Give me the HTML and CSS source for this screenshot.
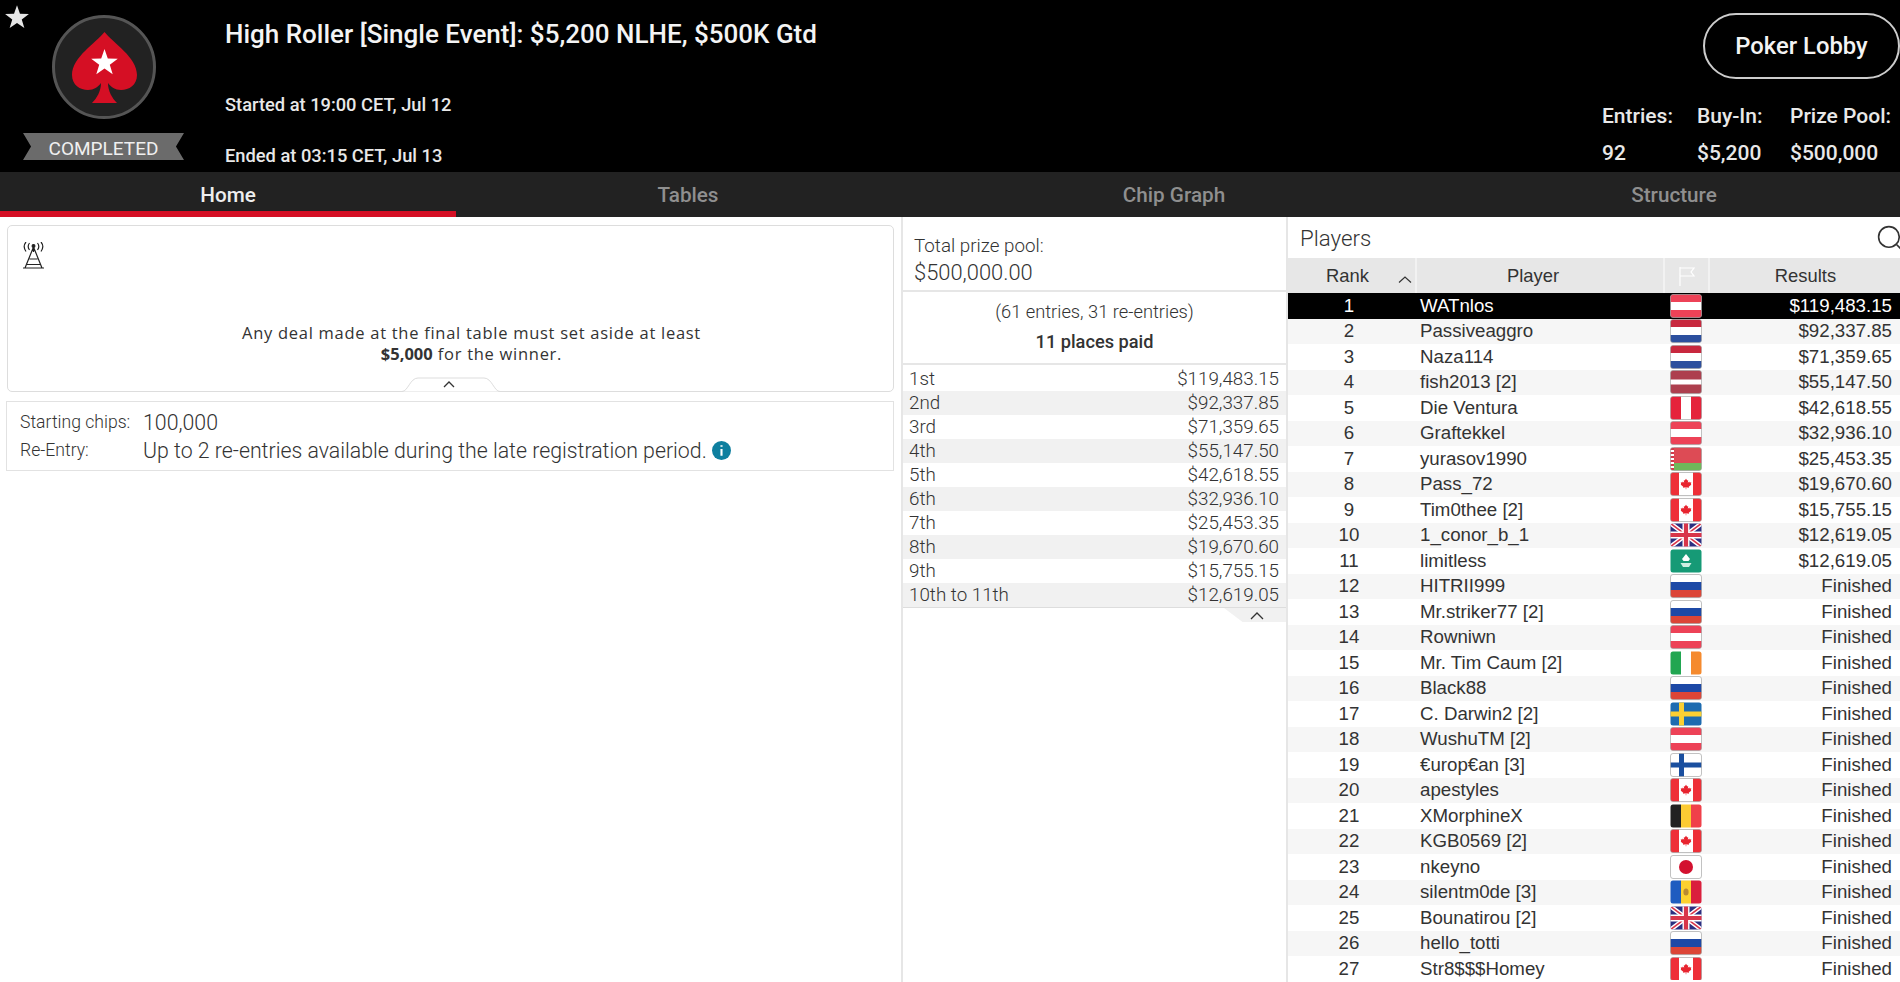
FILE: index.html
```html
<!DOCTYPE html>
<html lang="en">
<head>
<meta charset="utf-8">
<title>High Roller [Single Event]</title>
<link rel="stylesheet" href="styles.css">
</head>
<body>
<svg class="defs" aria-hidden="true">
  <defs>
    <clipPath id="fc"><rect x="0.5" y="0.5" width="31" height="23" rx="2.500"/></clipPath>
    <symbol id="leaf" viewBox="0 0 12 12"><path d="M6 0 7.200 2.200 8.400 1.700 8 4.500 9.500 3.200 10 4.300 12 4 11.300 6 12 6.500 9 9 9.300 10 6.300 9.600V12H5.700V9.600L2.700 10 3 9 0 6.500.7 6 0 4 2 4.300 2.500 3.200 4 4.500 3.600 1.700 4.800 2.200Z" fill="#e8242f"/></symbol>
    <symbol id="f-at" viewBox="0 0 32 24"><g clip-path="url(#fc)"><rect width="32" height="24" fill="#fff"/><rect width="32" height="8" fill="#ed4257"/><rect y="16" width="32" height="8" fill="#ed4257"/></g><rect x="0.5" y="0.5" width="31" height="23" rx="2.500" fill="none" stroke="#999" stroke-opacity=".6"/></symbol>
    <symbol id="f-nl" viewBox="0 0 32 24"><g clip-path="url(#fc)"><rect width="32" height="24" fill="#fff"/><rect width="32" height="8" fill="#c8283e"/><rect y="16" width="32" height="8" fill="#2c4f9e"/></g><rect x="0.5" y="0.5" width="31" height="23" rx="2.500" fill="none" stroke="#999" stroke-opacity=".6"/></symbol>
    <symbol id="f-lv" viewBox="0 0 32 24"><g clip-path="url(#fc)"><rect width="32" height="24" fill="#fff"/><rect width="32" height="9.500" fill="#ad3f4e"/><rect y="14.500" width="32" height="9.500" fill="#ad3f4e"/></g><rect x="0.5" y="0.5" width="31" height="23" rx="2.500" fill="none" stroke="#999" stroke-opacity=".6"/></symbol>
    <symbol id="f-pe" viewBox="0 0 32 24"><g clip-path="url(#fc)"><rect width="32" height="24" fill="#fff"/><rect width="11" height="24" fill="#e5233b"/><rect x="21" width="11" height="24" fill="#e5233b"/></g><rect x="0.5" y="0.5" width="31" height="23" rx="2.500" fill="none" stroke="#999" stroke-opacity=".6"/></symbol>
    <symbol id="f-by" viewBox="0 0 32 24"><g clip-path="url(#fc)"><rect width="32" height="16" fill="#dd4b55"/><rect y="16" width="32" height="8" fill="#6fb85a"/><rect width="4" height="24" fill="#fff"/><path d="M0 2H4M0 6H4M0 10H4M0 14H4M0 18H4M0 22H4" stroke="#d2394a" stroke-width="2"/></g><rect x="0.5" y="0.5" width="31" height="23" rx="2.500" fill="none" stroke="#999" stroke-opacity=".6"/></symbol>
    <symbol id="f-ca" viewBox="0 0 32 24"><g clip-path="url(#fc)"><rect width="32" height="24" fill="#fff"/><rect width="9" height="24" fill="#ee2f38"/><rect x="23" width="9" height="24" fill="#ee2f38"/><use href="#leaf" x="10.500" y="6.500" width="11" height="11"/></g><rect x="0.5" y="0.5" width="31" height="23" rx="2.500" fill="none" stroke="#999" stroke-opacity=".6"/></symbol>
    <symbol id="f-gb" viewBox="0 0 32 24"><g clip-path="url(#fc)"><rect width="32" height="24" fill="#2b2f80"/><path d="M0 0 32 24M32 0 0 24" stroke="#fff" stroke-width="4.500"/><path d="M0 0 32 24M32 0 0 24" stroke="#d8354a" stroke-width="1.600"/><path d="M16 0V24M0 12H32" stroke="#fff" stroke-width="7"/><path d="M16 0V24M0 12H32" stroke="#d8354a" stroke-width="4.200"/></g></symbol>
    <symbol id="f-mo" viewBox="0 0 32 24"><g clip-path="url(#fc)"><rect width="32" height="24" fill="#169a76"/><path d="M16 5 20 10 18.500 12H13.500L12 10Z" fill="#fff"/><path d="M10.500 14H21.500L19 18H13Z" fill="#cdeee2"/></g></symbol>
    <symbol id="f-ru" viewBox="0 0 32 24"><g clip-path="url(#fc)"><rect width="32" height="24" fill="#fff"/><rect y="8" width="32" height="8" fill="#1d49a6"/><rect y="16" width="32" height="8" fill="#dc4537"/></g><rect x="0.5" y="0.5" width="31" height="23" rx="2.500" fill="none" stroke="#999" stroke-opacity=".6"/></symbol>
    <symbol id="f-ie" viewBox="0 0 32 24"><g clip-path="url(#fc)"><rect width="32" height="24" fill="#fff"/><rect width="11" height="24" fill="#21a651"/><rect x="21" width="11" height="24" fill="#f58a2e"/></g></symbol>
    <symbol id="f-se" viewBox="0 0 32 24"><g clip-path="url(#fc)"><rect width="32" height="24" fill="#1d6bb0"/><rect x="9" width="5" height="24" fill="#fbcf33"/><rect y="9.500" width="32" height="5" fill="#fbcf33"/></g></symbol>
    <symbol id="f-fi" viewBox="0 0 32 24"><g clip-path="url(#fc)"><rect width="32" height="24" fill="#fff"/><rect x="9" width="5" height="24" fill="#1a4f9f"/><rect y="9.500" width="32" height="5" fill="#1a4f9f"/></g><rect x="0.5" y="0.5" width="31" height="23" rx="2.500" fill="none" stroke="#999" stroke-opacity=".6"/></symbol>
    <symbol id="f-be" viewBox="0 0 32 24"><g clip-path="url(#fc)"><rect width="11" height="24" fill="#222"/><rect x="11" width="10" height="24" fill="#fccb33"/><rect x="21" width="11" height="24" fill="#f0404a"/></g></symbol>
    <symbol id="f-jp" viewBox="0 0 32 24"><g clip-path="url(#fc)"><rect width="32" height="24" fill="#fff"/><circle cx="16" cy="12" r="7" fill="#d3112f"/></g><rect x="0.5" y="0.5" width="31" height="23" rx="2.500" fill="none" stroke="#999" stroke-opacity=".6"/></symbol>
    <symbol id="f-md" viewBox="0 0 32 24"><g clip-path="url(#fc)"><rect width="11" height="24" fill="#1e5cc0"/><rect x="11" width="10" height="24" fill="#fcd12f"/><rect x="21" width="11" height="24" fill="#da1f3d"/><ellipse cx="16" cy="12" rx="2.600" ry="3.600" fill="#b98a32"/></g></symbol>
  </defs>
</svg>

<header class="top">
  <svg class="fav" viewBox="40 35 29 28"><polygon points="54.5,36 57.8,45.5 67.8,45.7 59.8,51.7 62.7,61.3 54.5,55.6 46.3,61.3 49.2,51.7 41.2,45.7 51.2,45.5"/></svg>
  <div class="brand">
    <svg class="logo" viewBox="0 0 108 108">
      <circle cx="54" cy="54" r="50.500" fill="#222" stroke="#555" stroke-width="3"/>
      <path d="M54.500 19C46 30 22 44 22 62 22 72 30 77 38 77 44 77 48 74 51 70 51 78 47 85 42 90H67C62 85 58 78 58 70 61 74 65 77 71 77 79 77 87 72 87 62 87 44 63 30 54.500 19Z" fill="#d50f24"/>
      <polygon fill="#fff" points="54.5,36 57.8,45.5 67.8,45.7 59.8,51.7 62.7,61.3 54.5,55.6 46.3,61.3 49.2,51.7 41.2,45.7 51.2,45.5"/>
    </svg>
    <div class="ribbon">COMPLETED</div>
  </div>
  <div class="info">
    <h1 class="title">High Roller [Single Event]: $5,200 NLHE, $500K Gtd</h1>
    <div class="started">Started at 19:00 CET, Jul 12</div>
    <div class="ended">Ended at 03:15 CET, Jul 13</div>
  </div>
  <div class="side">
    <div class="lobby">Poker Lobby</div>
    <div class="stats">
      <span>Entries:</span><span>Buy-In:</span><span>Prize Pool:</span>
      <span>92</span><span>$5,200</span><span>$500,000</span>
    </div>
  </div>
</header>

<nav class="tabs">
  <div class="tab active">Home</div>
  <div class="tab">Tables</div>
  <div class="tab">Chip Graph</div>
  <div class="tab last">Structure</div>
</nav>

<main class="body">
  <section class="left">
    <div class="notice">
      <svg class="tower" viewBox="0 0 27 27" fill="none" stroke="#222" stroke-width="1.200">
        <path d="M13.500 5 5 26M13.500 5 22 26M13.500 4V10M9.500 17H17.500M7 22.500H20M3 26H24"/>
        <circle cx="13.500" cy="4" r="1.400" fill="#222"/>
        <path d="M9.500 1C8 3 8 6 9.500 8M17.500 1C19 3 19 6 17.500 8M6 0C3.500 3 3.500 6 6 9.500M21 0C23.500 3 23.500 6 21 9.500"/>
      </svg>
      <p class="deal">Any deal made at the final table must set aside at least<br><b>$5,000</b> for the winner.</p>
      <svg class="notch" viewBox="0 0 102 15"><path d="M0 14.500H2C8 14.500 10 1 18 1H84C92 1 94 14.500 100 14.500H102" fill="#fff" stroke="#ddd"/><path d="M44 10 49 5 54 10" fill="none" stroke="#333" stroke-width="1.300"/></svg>
    </div>
    <div class="facts">
      <div class="fact"><span class="fl">Starting chips:</span><span class="fv">100,000</span></div>
      <div class="fact"><span class="fl">Re-Entry:</span><span class="fv">Up to 2 re-entries available during the late registration period.</span>
        <svg class="inf" viewBox="0 0 18 18"><circle cx="9" cy="9" r="9" fill="#0e7f9f"/><path d="M9 4V5.500M9 7.500V14" stroke="#fff" stroke-width="2"/></svg>
      </div>
    </div>
  </section>

  <section class="mid">
    <div class="pool">
      <div class="pool-l">Total prize pool:</div>
      <div class="pool-v">$500,000.00</div>
    </div>
    <div class="paid">
      <div class="ent">(61 entries, 31 re-entries)</div>
      <div class="pl">11 places paid</div>
    </div>
    <div class="prizes">
      <div class="prize"><span>1st</span><span>$119,483.15</span></div>
      <div class="prize"><span>2nd</span><span>$92,337.85</span></div>
      <div class="prize"><span>3rd</span><span>$71,359.65</span></div>
      <div class="prize"><span>4th</span><span>$55,147.50</span></div>
      <div class="prize"><span>5th</span><span>$42,618.55</span></div>
      <div class="prize"><span>6th</span><span>$32,936.10</span></div>
      <div class="prize"><span>7th</span><span>$25,453.35</span></div>
      <div class="prize"><span>8th</span><span>$19,670.60</span></div>
      <div class="prize"><span>9th</span><span>$15,755.15</span></div>
      <div class="prize"><span>10th to 11th</span><span>$12,619.05</span></div>
    </div>
    <div class="fold"><svg class="fold-c" viewBox="0 0 14 8"><path d="M1 7 7 1 13 7" fill="none" stroke="#333" stroke-width="1.300"/></svg></div>
  </section>

  <section class="players">
    <div class="ph">
      <span class="ph-t">Players</span>
      <svg class="search" viewBox="0 0 24 24" fill="none" stroke="#333" stroke-width="1.500"><circle cx="11" cy="11" r="9.500"/><path d="M18 18 24 24"/></svg>
    </div>
    <div class="thead">
      <div class="th rank-h">Rank<svg class="sort" viewBox="0 0 14 7"><path d="M1 6.500 7 1 13 6.500" fill="none" stroke="#333" stroke-width="1.200"/></svg></div>
      <div class="th player-h">Player</div>
      <div class="th"><svg class="flag-h" viewBox="0 0 18 20" fill="none" stroke="#fff" stroke-width="1.200"><path d="M2 1V20M2 2H16L13 6 16 10H2"/></svg></div>
      <div class="th">Results</div>
    </div>
    <div class="tbody">
      <div class="row sel"><span class="r">1</span><span class="n">WATnlos</span><svg class="flag"><use href="#f-at"/></svg><span class="s">$119,483.15</span></div>
      <div class="row"><span class="r">2</span><span class="n">Passiveaggro</span><svg class="flag"><use href="#f-nl"/></svg><span class="s">$92,337.85</span></div>
      <div class="row"><span class="r">3</span><span class="n">Naza114</span><svg class="flag"><use href="#f-nl"/></svg><span class="s">$71,359.65</span></div>
      <div class="row"><span class="r">4</span><span class="n">fish2013 [2]</span><svg class="flag"><use href="#f-lv"/></svg><span class="s">$55,147.50</span></div>
      <div class="row"><span class="r">5</span><span class="n">Die Ventura</span><svg class="flag"><use href="#f-pe"/></svg><span class="s">$42,618.55</span></div>
      <div class="row"><span class="r">6</span><span class="n">Graftekkel</span><svg class="flag"><use href="#f-at"/></svg><span class="s">$32,936.10</span></div>
      <div class="row"><span class="r">7</span><span class="n">yurasov1990</span><svg class="flag"><use href="#f-by"/></svg><span class="s">$25,453.35</span></div>
      <div class="row"><span class="r">8</span><span class="n">Pass_72</span><svg class="flag"><use href="#f-ca"/></svg><span class="s">$19,670.60</span></div>
      <div class="row"><span class="r">9</span><span class="n">Tim0thee [2]</span><svg class="flag"><use href="#f-ca"/></svg><span class="s">$15,755.15</span></div>
      <div class="row"><span class="r">10</span><span class="n">1_conor_b_1</span><svg class="flag"><use href="#f-gb"/></svg><span class="s">$12,619.05</span></div>
      <div class="row"><span class="r">11</span><span class="n">limitless</span><svg class="flag"><use href="#f-mo"/></svg><span class="s">$12,619.05</span></div>
      <div class="row"><span class="r">12</span><span class="n">HITRII999</span><svg class="flag"><use href="#f-ru"/></svg><span class="s">Finished</span></div>
      <div class="row"><span class="r">13</span><span class="n">Mr.striker77 [2]</span><svg class="flag"><use href="#f-ru"/></svg><span class="s">Finished</span></div>
      <div class="row"><span class="r">14</span><span class="n">Rowniwn</span><svg class="flag"><use href="#f-at"/></svg><span class="s">Finished</span></div>
      <div class="row"><span class="r">15</span><span class="n">Mr. Tim Caum [2]</span><svg class="flag"><use href="#f-ie"/></svg><span class="s">Finished</span></div>
      <div class="row"><span class="r">16</span><span class="n">Black88</span><svg class="flag"><use href="#f-ru"/></svg><span class="s">Finished</span></div>
      <div class="row"><span class="r">17</span><span class="n">C. Darwin2 [2]</span><svg class="flag"><use href="#f-se"/></svg><span class="s">Finished</span></div>
      <div class="row"><span class="r">18</span><span class="n">WushuTM [2]</span><svg class="flag"><use href="#f-at"/></svg><span class="s">Finished</span></div>
      <div class="row"><span class="r">19</span><span class="n">€urop€an [3]</span><svg class="flag"><use href="#f-fi"/></svg><span class="s">Finished</span></div>
      <div class="row"><span class="r">20</span><span class="n">apestyles</span><svg class="flag"><use href="#f-ca"/></svg><span class="s">Finished</span></div>
      <div class="row"><span class="r">21</span><span class="n">XMorphineX</span><svg class="flag"><use href="#f-be"/></svg><span class="s">Finished</span></div>
      <div class="row"><span class="r">22</span><span class="n">KGB0569 [2]</span><svg class="flag"><use href="#f-ca"/></svg><span class="s">Finished</span></div>
      <div class="row"><span class="r">23</span><span class="n">nkeyno</span><svg class="flag"><use href="#f-jp"/></svg><span class="s">Finished</span></div>
      <div class="row"><span class="r">24</span><span class="n">silentm0de [3]</span><svg class="flag"><use href="#f-md"/></svg><span class="s">Finished</span></div>
      <div class="row"><span class="r">25</span><span class="n">Bounatirou [2]</span><svg class="flag"><use href="#f-gb"/></svg><span class="s">Finished</span></div>
      <div class="row"><span class="r">26</span><span class="n">hello_totti</span><svg class="flag"><use href="#f-ru"/></svg><span class="s">Finished</span></div>
      <div class="row"><span class="r">27</span><span class="n">Str8$$$Homey</span><svg class="flag"><use href="#f-ca"/></svg><span class="s">Finished</span></div>
    </div>
  </section>
</main>
</body>
</html>
```
FILE: styles.css
```css
* { box-sizing: border-box; }
html, body { margin: 0; height: 982px; overflow: hidden; background: #fff; }
body { font-family: Roboto, "Liberation Sans", sans-serif; color: #333; position: relative; }
.defs { position: absolute; width: 0; height: 0; }

/* header */
.top { height: 172px; background: #000; color: #e8e8e8; display: flex; }
.fav { position: absolute; left: 4px; top: 4px; width: 26px; height: 26px; fill: #e6e6e6; }
.brand { width: 225px; padding: 13px 0 0 23px; display: flex; flex-direction: column; }
.logo { width: 108px; height: 108px; margin-left: 27px; display: block; }
.ribbon { width: 161px; height: 27px; margin-top: 12px; background: #6b6b6b; color: #f0f0f0; font-size: 19px; line-height: 31px; text-align: center; clip-path: polygon(0 0, 100% 0, 95% 50%, 100% 100%, 0 100%, 5% 50%); }
.info { flex: 1; }
.title { margin: 20px 0 0; font-size: 26px; line-height: 28px; font-weight: 500; color: #f4f4f4; }
.started { margin-top: 47px; font-size: 18.300px; line-height: 20px; font-weight: 500; }
.ended { margin-top: 31px; font-size: 18.300px; line-height: 20px; font-weight: 500; }
.side { width: 298px; }
.lobby { width: 197px; height: 66px; margin: 13px 0 0 101px; border: 2px solid #ccc; border-radius: 33px; font-size: 23.800px; font-weight: 500; line-height: 63px; text-align: center; color: #f4f4f4; }
.stats { display: grid; grid-template-columns: 95px 93px 110px; row-gap: 13px; margin-top: 25px; font-size: 21px; line-height: 24px; font-weight: 500; }

/* tabs */
.tabs { height: 45px; background: #222; display: grid; grid-template-columns: 456px 464px 508px 472px; grid-template-rows: 45px; }
.tab { height: 45px; font-size: 20.700px; font-weight: 500; line-height: 46px; text-align: center; color: #8f8f8f; }
.tab.active { color: #eee; border-bottom: 6px solid #d50f24; }
.tab.last { padding-left: 20px; }

/* layout */
.body { height: 765px; display: flex; }
.left { width: 901px; padding: 8px 7px 0 6px; }
.mid { width: 387px; border-left: 2px solid #e6e6e6; border-right: 2px solid #e6e6e6; }
.players { flex: 1; min-width: 0; }

/* notice */
.notice { position: relative; height: 167px; margin-left: 1px; padding: 96px 0 0 42px; border: 1px solid #ddd; border-radius: 5px; }
.tower { position: absolute; left: 12px; top: 16px; width: 27px; height: 27px; }
.deal { margin: 0; font-family: "Open Sans", sans-serif; font-size: 16.500px; line-height: 21px; letter-spacing: .72px; text-align: center; color: #333; }
.deal b { font-weight: 700; letter-spacing: 0; }
.notch { position: absolute; left: 392px; bottom: -1px; width: 102px; height: 15px; }
.facts { height: 70px; margin-top: 9px; padding: 6px 0 0 13px; border: 1px solid #e2e2e2; }
.fact { display: flex; align-items: center; height: 28px; }
.fl { width: 123px; font-size: 17.600px; font-weight: 300; color: #333; }
.fv { font-size: 21.300px; font-weight: 300; color: #333; }
.inf { width: 19px; height: 19px; margin-left: 5px; }

/* prize pool */
.pool { height: 75px; padding: 18px 0 0 11px; border-bottom: 2px solid #e6e6e6; font-weight: 300; }
.pool-l { font-size: 18.800px; line-height: 22px; }
.pool-v { margin-top: 4px; font-size: 21.900px; line-height: 24px; }
.paid { height: 73px; padding-top: 8px; border-bottom: 2px solid #e6e6e6; text-align: center; }
.ent { font-size: 18.300px; line-height: 24px; font-weight: 300; }
.pl { margin-top: 6px; font-size: 18.200px; line-height: 24px; font-weight: 500; }
.prizes { margin-top: 2px; border-bottom: 1px solid #ddd; }
.prize { height: 24px; padding: 0 7px 0 6px; display: flex; justify-content: space-between; font-size: 18.800px; line-height: 24px; font-weight: 300; }
.prize:nth-child(even) { background: #f1f1f1; }
.fold { width: 62px; height: 14px; margin-left: auto; background: #f1f1f1; clip-path: polygon(0 0, 100% 0, 100% 100%, 30% 100%); display: flex; justify-content: flex-end; padding: 4px 22px 0 0; }
.fold-c { width: 14px; height: 8px; }

/* players */
.ph { height: 41px; padding: 0 0 0 12px; display: flex; justify-content: space-between; align-items: center; }
.ph-t { font-size: 22.300px; font-weight: 300; }
.search { width: 26px; height: 26px; margin-top: 1px; flex: none; margin-right: -3px; }
.thead { height: 35px; display: grid; grid-template-columns: 127px 248px 45px 193px; background: #e7e7e7; font-family: "Liberation Sans", Arial, sans-serif; font-size: 18.400px; }
.th { display: flex; align-items: center; justify-content: center; border-left: 2px solid #f2f2f2; color: #333; }
.th:first-child { border-left: 0; }
.rank-h { position: relative; padding-right: 8px; }
.player-h { padding-right: 14px; }
.sort { position: absolute; left: 110px; top: 18px; width: 14px; height: 7px; }
.flag-h { width: 18px; height: 20px; }
.tbody { height: 687px; overflow: hidden; font-family: "Liberation Sans", Arial, sans-serif; font-size: 18.700px; }
.row { height: 25.500px; display: grid; grid-template-columns: 122px 260px 32px 190px; align-items: center; color: #333; }
.row:nth-child(even) { background: #f6f6f6; }
.row.sel { background: #000; color: #fff; }
.r { text-align: center; }
.n { padding-left: 10px; }
.flag { width: 32px; height: 24px; display: block; }
.s { text-align: right; }
```
